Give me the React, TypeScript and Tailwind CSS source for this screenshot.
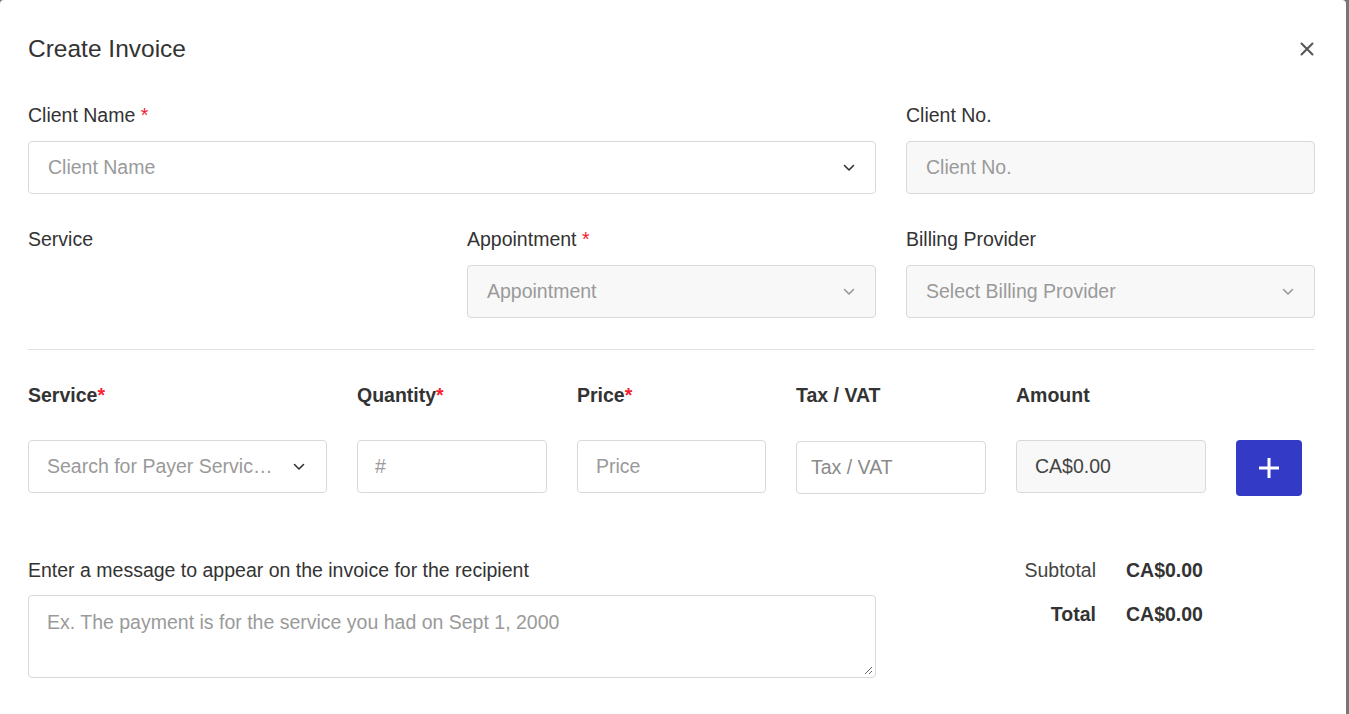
import React from "react";

const Chevron = ({ color = "#333" }: { color?: string }) => (
  <svg width="12" height="8" viewBox="0 0 12 8" fill="none">
    <path d="M1.5 1.5L6 6L10.5 1.5" stroke={color} strokeWidth="1.6" strokeLinecap="round" strokeLinejoin="round" />
  </svg>
);

const Star = () => <span className="text-[#f5222d]">*</span>;

export default function App() {
  return (
    <div
      className="w-[1349px] h-[714px] bg-[#777777] flex overflow-hidden"
      style={{ fontFamily: '"Liberation Sans", Arial, sans-serif' }}
    >
      <div className="w-[1346px] h-[714px] bg-white rounded-t-[4px] pl-[28px] pr-[31px] text-[#333] text-[19.5px]">
        {/* Header */}
        <div className="flex items-center justify-between pt-[33px] h-[65px]">
          <div className="text-[24.5px] leading-[32px]">Create Invoice</div>
          <svg width="14" height="14" viewBox="0 0 14 14" className="mr-[1px]">
            <path d="M1.5 1.5L12.5 12.5M12.5 1.5L1.5 12.5" stroke="#555" strokeWidth="2" strokeLinecap="round" />
          </svg>
        </div>

        {/* Row 1 */}
        <div className="grid grid-cols-[409px_409px_409px] gap-x-[30px] mt-[36px]">
          <div className="col-span-2">
            <div className="leading-[28px] mb-[12px]">
              Client Name <Star />
            </div>
            <div className="h-[53px] border border-[#d9d9d9] rounded-[4px] flex items-center justify-between pl-[19px] pr-[20px]">
              <span className="text-[#9a9a9a]">Client Name</span>
              <Chevron />
            </div>
          </div>
          <div>
            <div className="leading-[28px] mb-[12px]">Client No.</div>
            <div className="h-[53px] border border-[#d9d9d9] rounded-[4px] bg-[#f8f8f8] flex items-center pl-[19px]">
              <span className="text-[#9a9a9a]">Client No.</span>
            </div>
          </div>
        </div>

        {/* Row 2 */}
        <div className="grid grid-cols-[409px_409px_409px] gap-x-[30px] mt-[31px]">
          <div>
            <div className="leading-[28px]">Service</div>
          </div>
          <div>
            <div className="leading-[28px] mb-[12px]">
              Appointment <Star />
            </div>
            <div className="h-[53px] border border-[#d9d9d9] rounded-[4px] bg-[#f8f8f8] flex items-center justify-between pl-[19px] pr-[20px]">
              <span className="text-[#9a9a9a]">Appointment</span>
              <Chevron color="#999" />
            </div>
          </div>
          <div>
            <div className="leading-[28px] mb-[12px]">Billing Provider</div>
            <div className="h-[53px] border border-[#d9d9d9] rounded-[4px] bg-[#f8f8f8] flex items-center justify-between pl-[19px] pr-[20px]">
              <span className="text-[#9a9a9a]">Select Billing Provider</span>
              <Chevron color="#999" />
            </div>
          </div>
        </div>

        <div className="h-px bg-[#e0e0e0] mt-[31px]" />

        {/* Line items */}
        <div className="flex gap-x-[30px] mt-[31px] font-bold leading-[28px]">
          <div className="w-[299px]">
            Service<Star />
          </div>
          <div className="w-[190px]">
            Quantity<Star />
          </div>
          <div className="w-[189px]">
            Price<Star />
          </div>
          <div className="w-[190px]">Tax / VAT</div>
          <div className="w-[190px]">Amount</div>
        </div>
        <div className="flex gap-x-[30px] mt-[31px] items-start">
          <div className="w-[299px] h-[53px] border border-[#d9d9d9] rounded-[4px] flex items-center justify-between pl-[18px] pr-[21px]">
            <span className="text-[#9a9a9a] truncate w-[228px]">Search for Payer Services or Products</span>
            <Chevron />
          </div>
          <div className="w-[190px] h-[53px] border border-[#d9d9d9] rounded-[4px] flex items-center pl-[17px]">
            <span className="text-[#9a9a9a]">#</span>
          </div>
          <div className="w-[189px] h-[53px] border border-[#d9d9d9] rounded-[4px] flex items-center pl-[18px]">
            <span className="text-[#9a9a9a]">Price</span>
          </div>
          <div className="w-[190px] h-[53px] mt-[1px] border border-[#d9d9d9] rounded-[4px] flex items-center pl-[14px]">
            <span className="text-[#8a8a8a]">Tax / VAT</span>
          </div>
          <div className="w-[190px] h-[53px] border border-[#d9d9d9] rounded-[4px] bg-[#f8f8f8] flex items-center pl-[18px]">
            <span className="text-[#444]">CA$0.00</span>
          </div>
          <div className="w-[66px] h-[56px] rounded-[4px] bg-[#333bc6] flex items-center justify-center">
            <svg width="22" height="22" viewBox="0 0 22 22">
              <path d="M11 1V21M1 11H21" stroke="#fff" strokeWidth="3" />
            </svg>
          </div>
        </div>

        {/* Message & totals */}
        <div className="flex mt-[60px]">
          <div className="w-[848px]">
            <div className="leading-[28px] mb-[11px]">
              Enter a message to appear on the invoice for the recipient
            </div>
            <div className="relative h-[83px] border border-[#d9d9d9] rounded-[4px] pl-[18px] pt-[12px]">
              <span className="text-[#9a9a9a] leading-[28px]">
                Ex. The payment is for the service you had on Sept 1, 2000
              </span>
              <svg width="10" height="10" viewBox="0 0 10 10" className="absolute right-[2px] bottom-[2px]">
                <path d="M9 2L2 9M9 6L6 9" stroke="#666" strokeWidth="1" />
              </svg>
            </div>
          </div>
          <div className="ml-[72px] flex flex-col">
            <div className="flex leading-[28px]">
              <div className="w-[148px] text-right text-[#444]">Subtotal</div>
              <div className="ml-[30px] font-bold">CA$0.00</div>
            </div>
            <div className="flex leading-[28px] mt-[16px]">
              <div className="w-[148px] text-right font-bold">Total</div>
              <div className="ml-[30px] font-bold">CA$0.00</div>
            </div>
          </div>
        </div>
      </div>
    </div>
  );
}
